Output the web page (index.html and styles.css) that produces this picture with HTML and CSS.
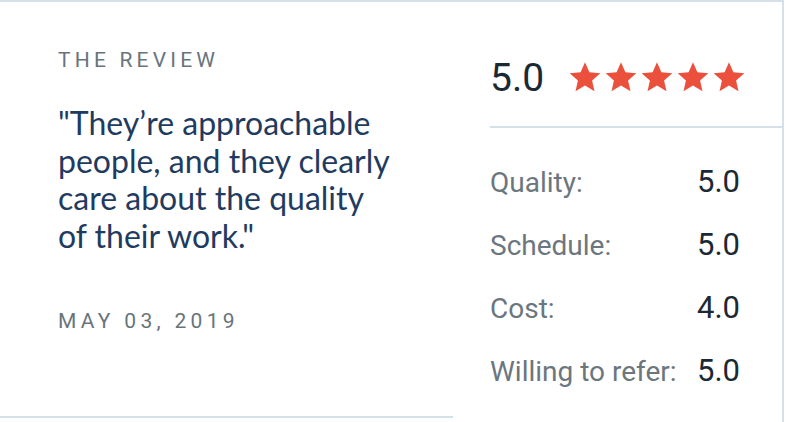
FILE: index.html
```html
<!DOCTYPE html>
<html>
<head>
<meta charset="utf-8">
<link rel="stylesheet" href="styles.css">
</head>
<body>
<div class="card">
  <section class="review">
    <h3 class="eyebrow">The Review</h3>
    <p class="quote">"They’re approachable people, and they clearly care about the quality of their work."</p>
    <p class="date">May 03, 2019</p>
  </section>
  <section class="ratings">
    <div class="overall">
      <span class="score">5.0</span>
      <span class="stars">
        <svg viewBox="0 0 24 24"><path d="M12 1.5l3.1 7.1 7.7.7-5.8 5.1 1.7 7.6L12 18l-6.7 4 1.7-7.6-5.8-5.1 7.7-.7z"/></svg>
        <svg viewBox="0 0 24 24"><path d="M12 1.5l3.1 7.1 7.7.7-5.8 5.1 1.7 7.6L12 18l-6.7 4 1.7-7.6-5.8-5.1 7.7-.7z"/></svg>
        <svg viewBox="0 0 24 24"><path d="M12 1.5l3.1 7.1 7.7.7-5.8 5.1 1.7 7.6L12 18l-6.7 4 1.7-7.6-5.8-5.1 7.7-.7z"/></svg>
        <svg viewBox="0 0 24 24"><path d="M12 1.5l3.1 7.1 7.7.7-5.8 5.1 1.7 7.6L12 18l-6.7 4 1.7-7.6-5.8-5.1 7.7-.7z"/></svg>
        <svg viewBox="0 0 24 24"><path d="M12 1.5l3.1 7.1 7.7.7-5.8 5.1 1.7 7.6L12 18l-6.7 4 1.7-7.6-5.8-5.1 7.7-.7z"/></svg>
      </span>
    </div>
    <dl class="scores">
      <div class="row"><dt>Quality:</dt><dd>5.0</dd></div>
      <div class="row"><dt>Schedule:</dt><dd>5.0</dd></div>
      <div class="row"><dt>Cost:</dt><dd>4.0</dd></div>
      <div class="row"><dt>Willing to refer:</dt><dd>5.0</dd></div>
    </dl>
  </section>
</div>
</body>
</html>
```
FILE: styles.css
```css
* { box-sizing: border-box; }
html, body { margin: 0; padding: 0; background: #fff; }
body { font-family: Roboto, "Liberation Sans", sans-serif; }

.card {
  display: flex;
  width: 784px;
  height: 422px;
  border-top: 2px solid #d5e1e9;
  border-right: 2px solid #d5e1e9;
}

.review {
  width: 453px;
  height: 416px;
  padding: 46px 0 0 58px;
  border-bottom: 2px solid #d5e1e9;
}

.eyebrow {
  margin: 0;
  font-family: Roboto, sans-serif;
  font-weight: 400;
  font-size: 21px;
  line-height: 24px;
  letter-spacing: 4.2px;
  text-transform: uppercase;
  color: #68747c;
}

.quote {
  margin: 32px 0 0;
  width: 332px;
  font-family: Lato, sans-serif;
  font-size: 32px;
  line-height: 37.7px;
  color: #1f3b60;
}

.date {
  margin: 54px 0 0;
  font-family: Roboto, sans-serif;
  font-size: 21px;
  line-height: 24px;
  letter-spacing: 4.3px;
  text-transform: uppercase;
  color: #68747c;
}

.ratings {
  flex: 1;
  padding-left: 37px;
}

.overall {
  display: flex;
  align-items: flex-start;
  height: 126px;
  padding-top: 52px;
  border-bottom: 2px solid #d5e1e9;
}

.score {
  font-size: 39px;
  line-height: 48px;
  color: #1b2935;
}

.stars {
  display: flex;
  gap: 2px;
  margin-left: 24px;
  padding-top: 6px;
}
.stars svg {
  width: 34px;
  height: 34px;
  fill: #eb503c;
}

.scores {
  margin: 35px 0 0;
  display: flex;
  flex-direction: column;
  gap: 26px;
}
.row {
  display: flex;
  align-items: baseline;
  height: 37px;
}
.row dt {
  width: 207px;
  font-size: 28px;
  color: #6b767e;
}
.row dd {
  margin: 0;
  font-size: 31px;
  color: #1b2935;
}
```
